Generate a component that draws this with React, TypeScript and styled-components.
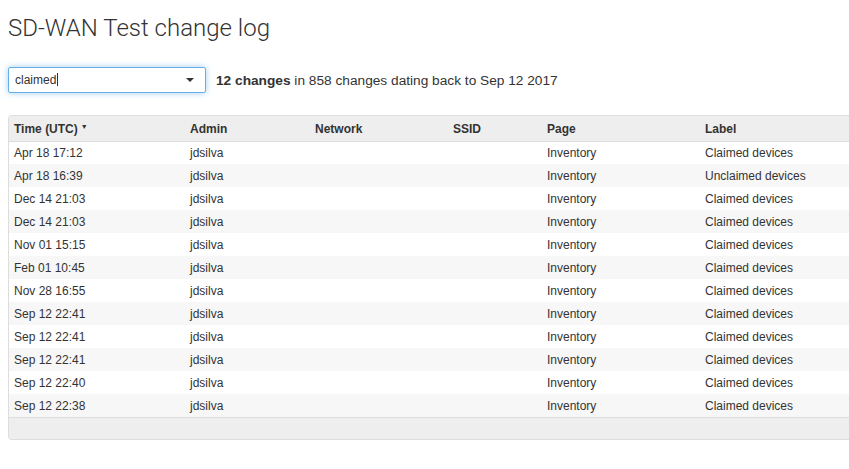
import React from "react";
import styled, { createGlobalStyle } from "styled-components";

const Global = createGlobalStyle`
  html, body { margin: 0; padding: 0; background: #fff; overflow: hidden; }
  body { font-family: "Liberation Sans", Arial, sans-serif; color: #333; }
`;

const Page = styled.div`
  padding: 12px 0 0 8px;
`;

const Title = styled.h1`
  margin: 0;
  font-family: Roboto, "Liberation Sans", sans-serif;
  font-weight: 300;
  font-size: 24px;
  line-height: 32px;
  color: #333;
`;

const FilterBar = styled.div`
  display: flex;
  align-items: center;
  gap: 10px;
  margin-top: 23px;
`;

const Select = styled.div`
  box-sizing: border-box;
  width: 198px;
  height: 26px;
  border: 1px solid #66afe9;
  border-radius: 2px;
  box-shadow: 0 0 6px rgba(102, 175, 233, 0.6);
  display: flex;
  align-items: center;
  justify-content: space-between;
  padding: 0 11px 0 6px;
  font-size: 12px;
  color: #333;
`;

const Cursor = styled.span`
  display: inline-block;
  width: 1px;
  height: 13px;
  background: #333;
  vertical-align: -2px;
  margin-left: 1px;
`;

const Caret = styled.span`
  width: 0;
  height: 0;
  border-left: 4px solid transparent;
  border-right: 4px solid transparent;
  border-top: 4px solid #333;
`;

const Summary = styled.div`
  font-size: 13.7px;
  color: #333;
  b { font-weight: bold; }
`;

const TableBox = styled.div`
  margin-top: 22px;
  border: 1px solid #ddd;
  border-right: none;
  border-radius: 4px 0 0 4px;
  overflow: hidden;
  width: 841px;
`;

const Table = styled.table`
  width: 100%;
  border-collapse: collapse;
  table-layout: fixed;
  font-size: 12px;
`;

const HeadRow = styled.tr`
  background: #eee;
  height: 25px;
  border-bottom: 1px solid #ddd;
`;

const Th = styled.th`
  text-align: left;
  font-weight: bold;
  padding: 1px 5px 0;
  color: #333;
`;

const SortArrow = styled.span`
  font-size: 7px;
  vertical-align: 4px;
  margin-left: 3px;
`;

const Row = styled.tr<{ $alt: boolean }>`
  height: 23px;
  background: ${(p) => (p.$alt ? "#f7f7f7" : "#fff")};
`;

const Td = styled.td`
  padding: 0 5px;
  color: #333;
  white-space: nowrap;
`;

const Footer = styled.div`
  height: 21px;
  background: #eee;
  border-top: 1px solid #ddd;
`;

const rows: [string, string][] = [
  ["Apr 18 17:12", "Claimed devices"],
  ["Apr 18 16:39", "Unclaimed devices"],
  ["Dec 14 21:03", "Claimed devices"],
  ["Dec 14 21:03", "Claimed devices"],
  ["Nov 01 15:15", "Claimed devices"],
  ["Feb 01 10:45", "Claimed devices"],
  ["Nov 28 16:55", "Claimed devices"],
  ["Sep 12 22:41", "Claimed devices"],
  ["Sep 12 22:41", "Claimed devices"],
  ["Sep 12 22:41", "Claimed devices"],
  ["Sep 12 22:40", "Claimed devices"],
  ["Sep 12 22:38", "Claimed devices"],
];

export default function App() {
  return (
    <Page>
      <Global />
      <Title>SD-WAN Test change log</Title>
      <FilterBar>
        <Select>
          <span>
            claimed<Cursor />
          </span>
          <Caret />
        </Select>
        <Summary>
          <b>12 changes</b> in 858 changes dating back to Sep 12 2017
        </Summary>
      </FilterBar>
      <TableBox>
        <Table>
          <colgroup>
            <col style={{ width: 176 }} />
            <col style={{ width: 125 }} />
            <col style={{ width: 138 }} />
            <col style={{ width: 94 }} />
            <col style={{ width: 158 }} />
            <col />
          </colgroup>
          <thead>
            <HeadRow>
              <Th>
                Time (UTC)<SortArrow>▼</SortArrow>
              </Th>
              <Th>Admin</Th>
              <Th>Network</Th>
              <Th>SSID</Th>
              <Th>Page</Th>
              <Th>Label</Th>
            </HeadRow>
          </thead>
          <tbody>
            {rows.map(([t, l], i) => (
              <Row key={i} $alt={i % 2 === 1}>
                <Td>{t}</Td>
                <Td>jdsilva</Td>
                <Td></Td>
                <Td></Td>
                <Td>Inventory</Td>
                <Td>{l}</Td>
              </Row>
            ))}
          </tbody>
        </Table>
        <Footer />
      </TableBox>
    </Page>
  );
}
